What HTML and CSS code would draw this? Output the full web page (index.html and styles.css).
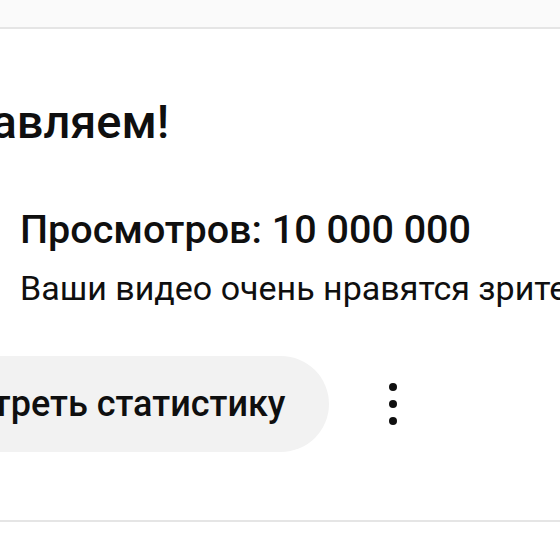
FILE: index.html
```html
<!DOCTYPE html>
<html lang="ru">
<head>
    <meta charset="UTF-8">
    <title>Поздравляем!</title>
    <link rel="stylesheet" href="styles.css">
</head>
<body>

    <!-- Top strip -->
    <div class="top-strip"></div>

    <!-- Milestone card -->
    <div class="card">
        <h2 class="card-title">Поздравляем!</h2>

        <div class="stats">
            <div class="stats-title">Просмотров: 10 000 000</div>
            <div class="stats-text">Ваши видео очень нравятся зрителям</div>
        </div>

        <div class="actions">
            <button class="stats-btn">Посмотреть статистику</button>
            <button class="more-btn" aria-label="Ещё">
                <svg width="24" height="48" viewBox="0 0 24 48">
                    <circle cx="12" cy="7" r="4"/>
                    <circle cx="12" cy="24" r="4"/>
                    <circle cx="12" cy="41" r="4"/>
                </svg>
            </button>
        </div>
    </div>

</body>
</html>
```

FILE: styles.css
```css
/* Reset */
* {
    margin: 0;
    padding: 0;
    box-sizing: border-box;
}

body {
    width: 560px;
    height: 560px;
    overflow: hidden;
    font-family: 'Roboto', 'Noto Sans', sans-serif;
    background-color: #fff;
    color: #0f0f0f;
}

/* Top strip */
.top-strip {
    height: 29px;
    background-color: #fafafa;
    border-bottom: 2px solid #e5e5e5;
}

/* Card */
.card {
    margin-left: -148px;
    width: 900px;
    height: 493px;
    padding-top: 65px;
    border-bottom: 2px solid #e5e5e5;
}

.card-title {
    font-size: 47px;
    font-weight: 500;
    line-height: 56px;
}

.stats {
    padding-left: 168px;
    margin-top: 56px;
}

.stats-title {
    font-size: 39.5px;
    font-weight: 500;
    line-height: 48px;
}

.stats-text {
    font-size: 34px;
    line-height: 44px;
    margin-top: 12px;
}

/* Actions */
.actions {
    display: flex;
    align-items: center;
    margin-top: 46px;
    margin-left: -15px;
}

.stats-btn {
    height: 96px;
    padding: 0 44px;
    border: none;
    border-radius: 48px;
    background-color: #f2f2f2;
    font-family: inherit;
    font-size: 36px;
    font-weight: 500;
    color: #0f0f0f;
}

.more-btn {
    width: 96px;
    height: 96px;
    margin-left: 16px;
    border: none;
    border-radius: 50%;
    background: none;
    display: flex;
    align-items: center;
    justify-content: center;
}

.more-btn svg {
    fill: #0f0f0f;
}
```
